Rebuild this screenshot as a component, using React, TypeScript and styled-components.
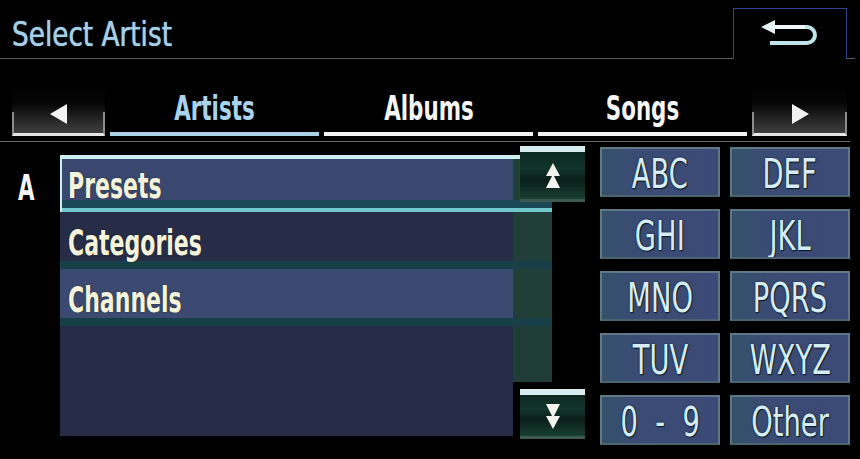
import styled, { createGlobalStyle } from "styled-components";

const GlobalStyle = createGlobalStyle`
  html, body {
    margin: 0;
    padding: 0;
    background: #000;
  }
`;

const FONT = `"DejaVu Sans Condensed", "DejaVu Sans", sans-serif`;

const Screen = styled.div`
  width: 860px;
  height: 459px;
  background: #000;
  overflow: hidden;
  font-family: ${FONT};
  display: flex;
  flex-direction: column;
`;

const Header = styled.div`
  height: 59px;
  box-sizing: border-box;
  padding: 8px 8px 0 12px;
  display: flex;
  justify-content: space-between;
  align-items: flex-start;
  border-bottom: 1px solid #5a5a5a;
  margin-right: 5px;
`;

const Squeeze = styled.span<{ $sx: number; $origin?: string }>`
  display: inline-block;
  transform: scaleX(${(p) => p.$sx});
  transform-origin: ${(p) => p.$origin || "left center"};
  white-space: pre;
`;

const Title = styled.div`
  font-size: 34px;
  line-height: 40px;
  margin-top: 6px;
  color: #a6cfe6;
  text-shadow: 0 0 1px #6a98b8, 0 0 1px #6a98b8;
`;

const BackButton = styled.button`
  width: 114px;
  height: 51px;
  box-sizing: border-box;
  background: #000;
  border: 1px solid #34448c;
  border-bottom: none;
  display: flex;
  align-items: center;
  justify-content: center;
  padding: 0;
`;

const TabBar = styled.div`
  display: flex;
  gap: 5px;
  padding: 22px 0 0 12px;
  height: 55px;
  margin-bottom: 5px;
`;

const TabRule = styled.div`
  height: 1px;
  width: 850px;
  background: #6a6a6a;
`;

const ArrowButton = styled.div<{ $w: number }>`
  position: relative;
  width: ${(p) => p.$w}px;
  height: 55px;
  box-sizing: border-box;
  background: linear-gradient(to bottom, #000 0%, #050505 40%, #2b2b2b 75%, #3e3e3e 94%);
  display: flex;
  align-items: center;
  justify-content: center;
  padding-top: 10px;
  &::after {
    content: "";
    position: absolute;
    left: 0;
    right: 0;
    bottom: 0;
    height: 24px;
    box-sizing: border-box;
    border: 2px solid #8c8c8c;
    border-top: none;
    border-bottom: 3px solid #e6e6e6;
  }
`;

const Tab = styled.div<{ $active?: boolean }>`
  width: 209px;
  height: 55px;
  box-sizing: border-box;
  display: flex;
  align-items: flex-start;
  justify-content: center;
  font-weight: bold;
  font-size: 34px;
  line-height: 38px;
  padding-top: 8px;
  color: ${(p) => (p.$active ? "#a9d3ea" : "#f6f6f6")};
  border-bottom: 4px solid ${(p) => (p.$active ? "#a9d2e6" : "#f2f2f2")};
`;

const Main = styled.div`
  display: flex;
  padding-top: 4px;
`;

const IndexCol = styled.div`
  width: 60px;
  padding: 22px 0 0 18px;
  box-sizing: border-box;
  color: #f4f4f0;
  font-weight: bold;
  font-size: 36px;
  line-height: 40px;
`;

const ListArea = styled.div`
  position: relative;
  width: 525px;
  height: 300px;
`;

const List = styled.div`
  margin-top: 9px;
  width: 492px;
  display: flex;
  flex-direction: column;
`;

const Row = styled.div<{ $tone: "light" | "dark"; $selected?: boolean }>`
  height: 57px;
  box-sizing: border-box;
  padding: 11px 0 0 8px;
  font-weight: bold;
  font-size: 36px;
  line-height: 40px;
  color: #f6f3dc;
  text-shadow: 0 0 2px #1a2a20;
  background:
    linear-gradient(to bottom, transparent 0 calc(100% - 8px), #173f48 calc(100% - 8px)),
    linear-gradient(to right, ${(p) => (p.$tone === "light" ? "#3c4a72" : "#272c47")} 0 453px, #213e38 453px);
  ${(p) =>
    p.$selected &&
    `
    border-top: 4px solid #cdeff2;
    border-left: 2px solid #cdeff2;
    padding: 7px 0 0 6px;
    background:
      linear-gradient(to bottom, transparent 0 calc(100% - 12px), #1a4a58 calc(100% - 12px), #1a4a58 calc(100% - 4px), #72c8cc calc(100% - 4px)),
      linear-gradient(to right, #3a4870 0 451px, #21403a 451px);
  `}
`;

const Filler = styled.div`
  height: 110px;
  background:
    linear-gradient(#1f3c37, #1f3c37) right top / 39px 56px no-repeat,
    linear-gradient(#262c46, #262c46) left top / 453px 100% no-repeat;
`;

const ScrollButton = styled.div<{ $top: number; $h: number }>`
  position: absolute;
  left: 460px;
  top: ${(p) => p.$top}px;
  width: 65px;
  height: ${(p) => p.$h}px;
  box-sizing: border-box;
  border-top: 6px solid #d6ecee;
  background: linear-gradient(to bottom, #0c2822 0%, #12352c 35%, #0a1f19 60%, #1a3f33 100%);
  border-bottom: 3px solid #3c5a50;
  display: flex;
  align-items: center;
  justify-content: center;
`;

const Keypad = styled.div`
  display: grid;
  grid-template-columns: 120px 120px;
  grid-auto-rows: 50px;
  column-gap: 10px;
  row-gap: 12px;
  margin: 1px 0 0 15px;
`;

const Key = styled.div`
  box-sizing: border-box;
  border: 2px solid #5e7886;
  border-bottom-color: #4a6470;
  background: linear-gradient(to right, #35516a 0%, #3a4b74 30%, #3b4a76 100%);
  display: flex;
  align-items: center;
  justify-content: center;
  padding-top: 4px;
  color: #d6edf5;
  font-size: 40px;
  line-height: 44px;
  text-shadow: 0 0 2px #0a1a20, 1px 1px 1px #0a1a20;
  overflow: hidden;
`;

const BackIcon = () => (
  <svg width="58" height="28" viewBox="0 0 58 28">
    <polygon points="0,7 14,0 14,14" fill="#e4f4f4" />
    <path d="M12 7 H46 A8 8 0 0 1 46 23 H9" fill="none" stroke="#bfe4ea" strokeWidth="4" />
    <path d="M12 7 H44" stroke="#eef8f8" strokeWidth="4" />
  </svg>
);

const Triangle = ({ dir }: { dir: "left" | "right" }) => (
  <svg width="18" height="20" viewBox="0 0 18 20">
    <polygon points={dir === "left" ? "0,10 17,0 17,20" : "1,0 18,10 1,20"} fill="#f2f2f2" />
  </svg>
);

const DoubleArrow = ({ dir }: { dir: "up" | "down" }) => (
  <svg width="16" height="26" viewBox="0 0 16 26" style={{ transform: dir === "down" ? "rotate(180deg)" : undefined }}>
    <polygon points="8,0 15,13 1,13" fill="#f4f4ec" />
    <polygon points="8,11 15,25 1,25" fill="#f4f4ec" />
  </svg>
);

const rows = [
  { label: "Presets", tone: "light" as const, selected: true },
  { label: "Categories", tone: "dark" as const },
  { label: "Channels", tone: "light" as const },
];

const keys = ["ABC", "DEF", "GHI", "JKL", "MNO", "PQRS", "TUV", "WXYZ", "0  -  9", "Other"];

export default function App() {
  return (
    <Screen>
      <GlobalStyle />
      <Header>
        <Title>
          <Squeeze $sx={0.86}>Select Artist</Squeeze>
        </Title>
        <BackButton>
          <BackIcon />
        </BackButton>
      </Header>
      <TabBar>
        <ArrowButton $w={93}>
          <Triangle dir="left" />
        </ArrowButton>
        <Tab $active>
          <Squeeze $sx={0.7} $origin="center">Artists</Squeeze>
        </Tab>
        <Tab>
          <Squeeze $sx={0.7} $origin="center">Albums</Squeeze>
        </Tab>
        <Tab>
          <Squeeze $sx={0.7} $origin="center">Songs</Squeeze>
        </Tab>
        <ArrowButton $w={95}>
          <Triangle dir="right" />
        </ArrowButton>
      </TabBar>
      <TabRule />
      <Main>
        <IndexCol>
          <Squeeze $sx={0.66}>A</Squeeze>
        </IndexCol>
        <ListArea>
          <List>
            {rows.map((r) => (
              <Row key={r.label} $tone={r.tone} $selected={r.selected}>
                <Squeeze $sx={0.68}>{r.label}</Squeeze>
              </Row>
            ))}
            <Filler />
          </List>
          <ScrollButton $top={0} $h={56}>
            <DoubleArrow dir="up" />
          </ScrollButton>
          <ScrollButton $top={243} $h={50}>
            <DoubleArrow dir="down" />
          </ScrollButton>
        </ListArea>
        <Keypad>
          {keys.map((k) => (
            <Key key={k}>
              <Squeeze $sx={0.76} $origin="center">{k}</Squeeze>
            </Key>
          ))}
        </Keypad>
      </Main>
    </Screen>
  );
}
